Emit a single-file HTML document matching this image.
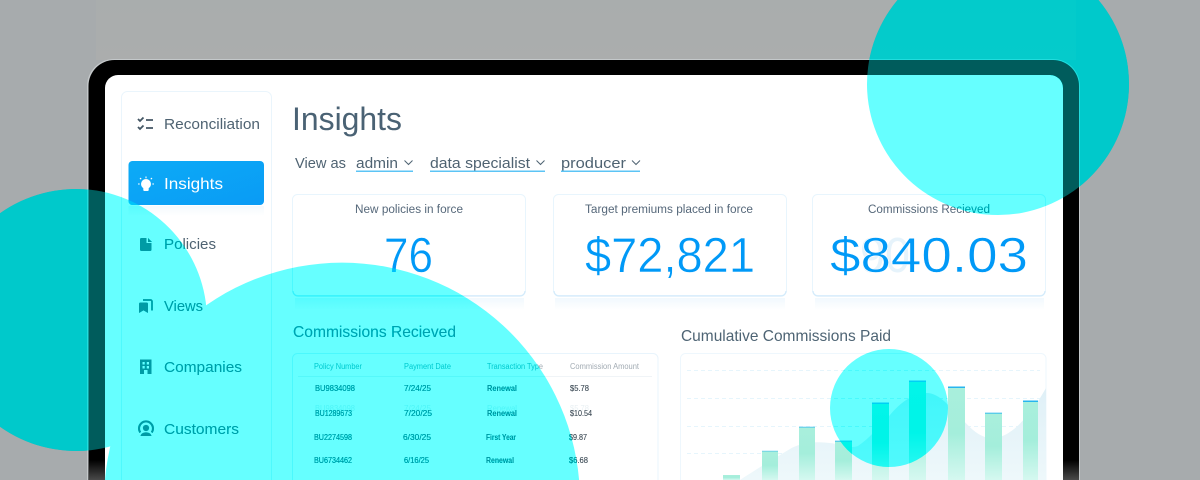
<!DOCTYPE html>
<html><head><meta charset="utf-8"><style>
html,body{margin:0;padding:0;background:#a7abad;width:1200px;height:480px;overflow:hidden}
svg{display:block;width:1200px;height:480px;overflow:hidden}
text{font-family:"Liberation Sans",sans-serif}
.n{font-size:15px;fill:#4f6372}
.h{font-size:8px;fill:#a2abb3}
.r{font-size:8.2px;fill:#2f5566;stroke:#2f5566;stroke-width:.12}
.b{font-size:8px;fill:#2f5566;font-weight:bold}
.m{font-size:8.2px;fill:#3c4a55;stroke:#3c4a55;stroke-width:.12}
.g{font-size:8px;fill:#e9f0f3}
.l{font-size:11.5px;fill:#56687a}
.v{font-size:49px;fill:#0099f7;stroke:#fff;stroke-width:.5}
.f{font-size:15px;fill:#4f6372}
</style></head><body>
<svg width="1200" height="480" viewBox="0 0 1200 480" xmlns="http://www.w3.org/2000/svg">
<defs>
<linearGradient id="bar" x1="0" y1="0" x2="0" y2="1"><stop offset="0" stop-color="#a9efdc"/><stop offset=".5" stop-color="#a4eedb"/><stop offset="1" stop-color="#d5f8f0"/></linearGradient>
<linearGradient id="area" x1="0" y1="0" x2="0" y2="1"><stop offset="0" stop-color="#dff0f7"/><stop offset="1" stop-color="#eef8fb"/></linearGradient>
<linearGradient id="btn" x1="0" y1="0" x2="1" y2="1"><stop offset="0" stop-color="#0cabf6"/><stop offset="1" stop-color="#0a9bf5"/></linearGradient>
<linearGradient id="sh" x1="0" y1="0" x2="0" y2="1"><stop offset="0" stop-color="#e8f4fc"/><stop offset="1" stop-color="#ffffff"/></linearGradient>
<linearGradient id="fade" x1="0" y1="0" x2="0" y2="1"><stop offset="0" stop-color="#000"/><stop offset="1" stop-color="#4a4a4a"/></linearGradient>
<linearGradient id="top" x1="0" y1="0" x2="0" y2="1"><stop offset="0" stop-color="#a9adad"/><stop offset="1" stop-color="#abadad"/></linearGradient>
<g id="c">
<path d="M897.500 0A131 131 0 1 0 1098.500 0Z"/>
<path d="M0 213.300A131 131 0 1 1 0 426.700Z"/>
<path d="M104.900 480A238 238 0 0 1 579.100 480Z"/>
<circle cx="889" cy="408" r="59"/>
</g>
</defs>

<rect width="1200" height="480" fill="#a7abad"/>
<rect x="96" y="0" width="980" height="60" fill="url(#top)"/>

<!-- device frame -->
<path d="M87 480V86A27 27 0 0 1 114 59H1053A27 27 0 0 1 1080 86V480Z" fill="#c4c8ca"/>
<path d="M88.500 480V86A26 26 0 0 1 114.500 60H1053A26 26 0 0 1 1079 86V480Z" fill="#000"/>
<rect x="89" y="460" width="16" height="20" fill="url(#fade)"/>
<rect x="1063" y="460" width="16" height="20" fill="url(#fade)"/>
<path d="M105 480V88A13 13 0 0 1 118 75H1050A13 13 0 0 1 1063 88V480Z" fill="#fff"/>

<g style="filter:blur(.3px)">
<!-- sidebar -->
<path d="M121.500 480V97.500A6 6 0 0 1 127.500 91.500H265.500A6 6 0 0 1 271.500 97.500V480" fill="#fff" stroke="#eaf5fc"/>
<g fill="none" stroke="#445664" stroke-width="1.800">
<path d="M138 119l2 2 3.500-3.500M138 127l2 2 3.500-3.500"/>
<path d="M146 120h7M146 128h7"/>
</g>
<text class="n" x="164" y="129" textLength="96" lengthAdjust="spacingAndGlyphs">Reconciliation</text>

<rect x="128.500" y="161" width="135.500" height="44" rx="4" fill="url(#btn)"/>
<rect x="128.500" y="206" width="135.500" height="10" fill="url(#sh)" opacity=".5"/>
<g fill="#fff">
<circle cx="146" cy="184" r="5"/><rect x="143.300" y="187" width="5.400" height="4" rx="1"/>
</g>
<g stroke="#fff" stroke-width="1.100" fill="none"><path d="M146 176.500v1.800M140 178l1.200 1.200M152 178l-1.200 1.200M138 184h1.700M152.300 184h1.700"/></g>
<text x="164" y="189" font-size="16" fill="#fff" textLength="59" lengthAdjust="spacingAndGlyphs">Insights</text>

<path d="M140 239.500a1.500 1.500 0 0 1 1.500-1.500h5v5h5v6.500a1.500 1.500 0 0 1-1.500 1.500h-8.500a1.500 1.500 0 0 1-1.500-1.500zM148 238l4 4h-4z" fill="#4f6372"/>
<text class="n" x="164" y="249" textLength="52" lengthAdjust="spacingAndGlyphs">Policies</text>

<path d="M139 304a1.500 1.500 0 0 1 1.500-1.500h6a1.500 1.500 0 0 1 1.500 1.500v9l-4.500-2.600-4.500 2.600z" fill="#4f6372"/>
<path d="M143 300h7.500a1.500 1.500 0 0 1 1.500 1.500v9" fill="none" stroke="#4f6372" stroke-width="1.700"/>
<text class="n" x="164" y="311" textLength="39" lengthAdjust="spacingAndGlyphs">Views</text>

<path fill-rule="evenodd" d="M140 359.500h11.500v14.500h-4v-4h-3.500v4h-4zM142.500 362v2.500h2.300v-2.500zM146.700 362v2.500h2.300v-2.500zM142.500 366v2.500h2.300v-2.500zM146.700 366v2.500h2.300v-2.500z" fill="#4f6372"/>
<text class="n" x="164" y="372" textLength="78" lengthAdjust="spacingAndGlyphs">Companies</text>

<path d="M140.300 432.500a7 7 0 1 1 11.400 0" fill="none" stroke="#4f6372" stroke-width="2"/>
<circle cx="146" cy="428" r="3.100" fill="#4f6372"/>
<path d="M140.500 436c.5-2.600 2.800-3.600 5.500-3.600s5 1 5.500 3.600z" fill="#4f6372"/>
<text class="n" x="164" y="434" textLength="75" lengthAdjust="spacingAndGlyphs">Customers</text>

<!-- header -->
<text x="292" y="130" font-size="32" fill="#4a6274" textLength="110" lengthAdjust="spacingAndGlyphs">Insights</text>
<text class="f" x="295" y="168" textLength="51" lengthAdjust="spacingAndGlyphs">View as</text>
<text class="f" x="356" y="168" textLength="42" lengthAdjust="spacingAndGlyphs">admin</text>
<text class="f" x="430" y="168" textLength="100" lengthAdjust="spacingAndGlyphs">data specialist</text>
<text class="f" x="561" y="168" textLength="65" lengthAdjust="spacingAndGlyphs">producer</text>
<g fill="none" stroke="#4f6372" stroke-width="1"><path d="M404.500 160.500l4 4 4-4M536.500 160.500l4 4 4-4M632 160.500l4 4 4-4"/></g>
<g fill="#5cc4f5"><rect x="356" y="170.500" width="57" height="1.500"/><rect x="430" y="170.500" width="115" height="1.500"/><rect x="561" y="170.500" width="79" height="1.500"/></g>

<!-- KPI cards -->
<g fill="url(#sh)" opacity=".6"><rect x="295" y="298" width="229" height="12"/><rect x="555" y="298" width="230" height="12"/><rect x="815" y="298" width="229" height="12"/></g>
<g fill="#fff" stroke="#e8f5fd">
<rect x="292.500" y="194.500" width="233" height="101" rx="5"/>
<rect x="553.500" y="194.500" width="233" height="101" rx="5"/>
<rect x="812.500" y="194.500" width="233" height="101" rx="5"/>
</g>
<g fill="none" stroke="#d3ebfb" stroke-width="1.200"><path d="M293 291a5 5 0 0 0 5 5h222a5 5 0 0 0 5-5M554 291a5 5 0 0 0 5 5h222a5 5 0 0 0 5-5M813 291a5 5 0 0 0 5 5h222a5 5 0 0 0 5-5"/></g>
<text class="l" x="355" y="213" textLength="108" lengthAdjust="spacingAndGlyphs">New policies in force</text>
<text class="l" x="585" y="213" textLength="168" lengthAdjust="spacingAndGlyphs">Target premiums placed in force</text>
<text class="l" x="868" y="213" textLength="122" lengthAdjust="spacingAndGlyphs">Commissions Recieved</text>
<text x="860" y="272" font-size="49" fill="#e6f3fb" textLength="50" lengthAdjust="spacingAndGlyphs">90</text>
<text class="v" x="384" y="272" textLength="49" lengthAdjust="spacingAndGlyphs">76</text>
<text class="v" x="585" y="272" textLength="170" lengthAdjust="spacingAndGlyphs">$72,821</text>
<text class="v" x="830" y="272" textLength="198" lengthAdjust="spacingAndGlyphs">$840.03</text>

<!-- section headings -->
<text x="293" y="337" font-size="16" fill="#2b6a80" textLength="163" lengthAdjust="spacingAndGlyphs">Commissions Recieved</text>
<text x="681" y="341" font-size="16" fill="#4e6474" textLength="210" lengthAdjust="spacingAndGlyphs">Cumulative Commissions Paid</text>

<!-- table -->
<path d="M292.500 480V358.500A5 5 0 0 1 297.500 353.500H653A5 5 0 0 1 658 358.500V480" fill="#fff" stroke="#e8f4fc"/>
<rect x="298" y="376" width="354" height="1" fill="#f0f4f7"/>
<text class="h" x="314" y="369" textLength="48" lengthAdjust="spacingAndGlyphs">Policy Number</text>
<text class="h" x="404" y="369" textLength="47" lengthAdjust="spacingAndGlyphs">Payment Date</text>
<text class="h" x="487" y="369" textLength="56" lengthAdjust="spacingAndGlyphs">Transaction Type</text>
<text class="h" x="570" y="369" textLength="69" lengthAdjust="spacingAndGlyphs">Commission Amount</text>

<text class="r" x="315" y="391" textLength="40" lengthAdjust="spacingAndGlyphs">BU9834098</text>
<text class="r" x="404" y="391" textLength="27" lengthAdjust="spacingAndGlyphs">7/24/25</text>
<text class="b" x="487" y="391" textLength="30" lengthAdjust="spacingAndGlyphs">Renewal</text>
<text class="m" x="570" y="391" textLength="19" lengthAdjust="spacingAndGlyphs">$5.78</text>

<text class="g" x="315" y="411" textLength="40" lengthAdjust="spacingAndGlyphs">BU9834098</text>
<text class="g" x="404" y="411" textLength="27" lengthAdjust="spacingAndGlyphs">7/24/25</text>
<text class="g" x="487" y="411" textLength="30" lengthAdjust="spacingAndGlyphs">Renewal</text>
<text class="g" x="570" y="411" textLength="19" lengthAdjust="spacingAndGlyphs">$5.78</text>

<text class="r" x="315" y="416" textLength="37" lengthAdjust="spacingAndGlyphs">BU1289673</text>
<text class="r" x="404" y="416" textLength="28" lengthAdjust="spacingAndGlyphs">7/20/25</text>
<text class="b" x="487" y="416" textLength="30" lengthAdjust="spacingAndGlyphs">Renewal</text>
<text class="m" x="570" y="416" textLength="22" lengthAdjust="spacingAndGlyphs">$10.54</text>

<text class="r" x="314" y="440" textLength="38" lengthAdjust="spacingAndGlyphs">BU2274598</text>
<text class="r" x="403" y="440" textLength="28" lengthAdjust="spacingAndGlyphs">6/30/25</text>
<text class="b" x="486" y="440" textLength="30" lengthAdjust="spacingAndGlyphs">First Year</text>
<text class="m" x="569" y="440" textLength="18" lengthAdjust="spacingAndGlyphs">$9.87</text>

<text class="r" x="314" y="463" textLength="38" lengthAdjust="spacingAndGlyphs">BU6734462</text>
<text class="r" x="404" y="463" textLength="25" lengthAdjust="spacingAndGlyphs">6/16/25</text>
<text class="b" x="486" y="463" textLength="28" lengthAdjust="spacingAndGlyphs">Renewal</text>
<text class="m" x="569" y="463" textLength="19" lengthAdjust="spacingAndGlyphs">$6.68</text>

<!-- chart -->
<path d="M680.500 480V358.500A5 5 0 0 1 685.500 353.500H1041A5 5 0 0 1 1046 358.500V480" fill="#fff" stroke="#eef7fd"/>
<g stroke="#e6f5fc" stroke-width="1" stroke-dasharray="4 3"><path d="M687 370.500h353M687 398.500h353M687 426.500h353M687 453.500h353"/></g>
<path d="M740 480C755 470 775 458 790 449C800 443 815 441 830 443C840 444 850 449 858 446C870 438 880 425 890 415C900 403 912 394 925 393C940 392 950 408 963 420C972 430 980 437 990 438C1003 439 1015 430 1025 418C1035 408 1040 398 1046 388V480Z" fill="url(#area)"/>
<g fill="url(#bar)">
<rect x="723" y="475" width="17" height="5"/>
<rect x="762" y="451" width="16" height="29"/>
<rect x="799" y="427" width="16" height="53"/>
<rect x="835" y="441" width="17" height="39"/>
<rect x="872" y="403" width="17" height="77"/>
<rect x="909" y="381" width="17" height="99"/>
<rect x="948" y="387" width="17" height="93"/>
<rect x="985" y="413" width="17" height="67"/>
<rect x="1023" y="401" width="15" height="79"/>
</g>
<g fill="#27b5ef">
<rect x="799" y="426.500" width="16" height="1.500" opacity=".45"/>
<rect x="835" y="440.500" width="17" height="1.500" opacity=".6"/>
<rect x="872" y="402.500" width="17" height="1.500"/>
<rect x="909" y="380.500" width="17" height="1.500"/>
<rect x="948" y="386.500" width="17" height="1.500"/>
<rect x="985" y="412.500" width="17" height="1.500" opacity=".6"/>
<rect x="1023" y="400.500" width="15" height="1.500"/>
<rect x="762" y="450.500" width="16" height="1.500" opacity=".35"/>
</g>
</g>

<!-- blended circles -->
<use href="#c" fill="rgb(88,255,255)" style="mix-blend-mode:color-burn"/>
<use href="#c" fill="rgb(102,255,255)" style="mix-blend-mode:multiply"/>
<use href="#c" fill="rgb(0,92,92)" style="mix-blend-mode:screen"/>
</svg>
</body></html>
